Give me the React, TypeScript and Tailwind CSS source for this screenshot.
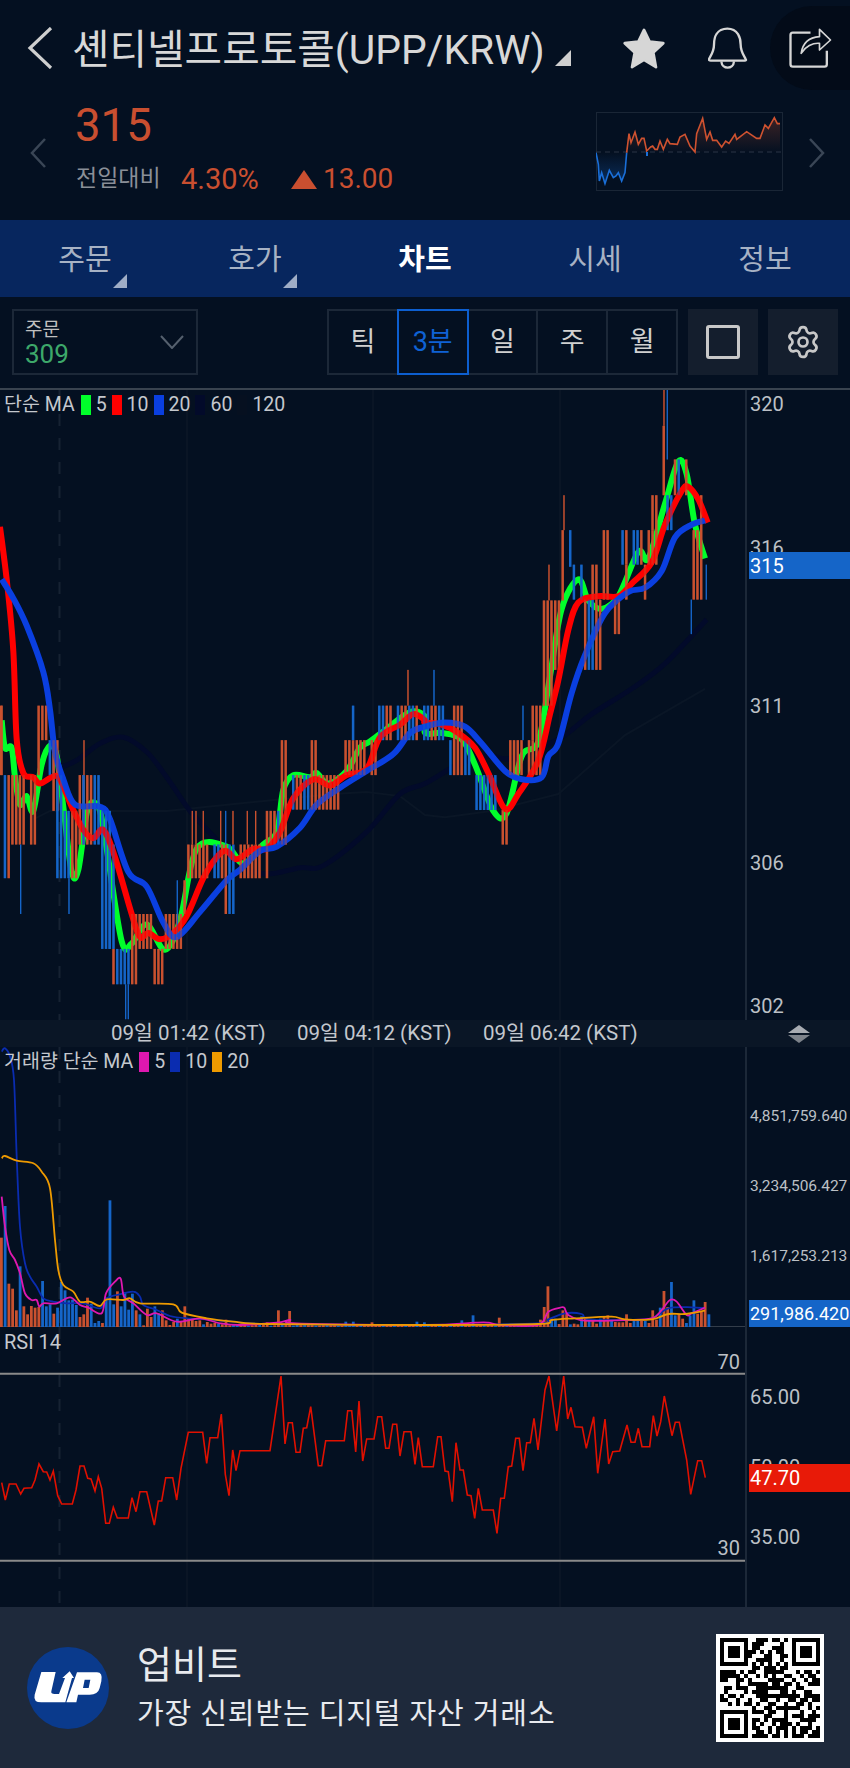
import React from 'react';
import { Settings } from 'lucide-react';

type Pt = number[];

const ORANGE = '#c9512f';
const BLUE = '#1565c8';
const FONT = "font-[Roboto,'Noto_Sans_CJK_KR',sans-serif]";

const shift = (pts: Pt[]) => pts.map(([x, y]) => [x + 1275, y]);
const line = (pts: Pt[], fy: (y: number) => number) =>
    pts.map(([x, y]) => `${(x / 3).toFixed(1)},${fy(y).toFixed(1)}`).join(' ');

// catmull-rom through the points, the moving averages are curves in the chart
function smooth(pts: Pt[], fy: (y: number) => number): string {
    const p = pts.map(([x, y]) => [x / 3, fy(y)]);
    let d = `M${p[0][0].toFixed(1)} ${p[0][1].toFixed(1)}`;
    for (let i = 0; i < p.length - 1; i++) {
        const a = p[Math.max(i - 1, 0)];
        const b = p[i];
        const c = p[i + 1];
        const e = p[Math.min(i + 2, p.length - 1)];
        const c1x = b[0] + (c[0] - a[0]) / 6;
        const c1y = b[1] + (c[1] - a[1]) / 6;
        const c2x = c[0] - (e[0] - b[0]) / 6;
        const c2y = c[1] - (e[1] - b[1]) / 6;
        d += ` C${c1x.toFixed(1)} ${c1y.toFixed(1)} ${c2x.toFixed(1)} ${c2y.toFixed(1)} ${c[0].toFixed(1)} ${c[1].toFixed(1)}`;
    }
    return d;
}

const mainY = (y: number) => y / 2.376;
const lowerY = (y: number) => y / 3 - 7;

// main chart moving averages, coordinates read off the zoomed crops
const ma5: Pt[] = [
    [5, 785], [15, 850], [35, 850], [45, 920], [60, 985], [80, 965], [100, 1000], [125, 890], [150, 845], [170, 870],
    [190, 990], [215, 1145], [235, 1140], [260, 1005], [280, 980], [300, 1000], [320, 1090], [365, 1310], [395, 1315],
    [440, 1270], [495, 1330], [540, 1260], [590, 1090], [680, 1085], [730, 1125], [790, 1080], [830, 1050], [850, 950],
    [880, 915], [930, 920], [950, 910], [985, 935], [1040, 905], [1080, 850], [1110, 835], [1160, 805], [1230, 765], [1275, 775],
    ...shift([
        [0, 815], [50, 815], [110, 830], [150, 890], [205, 1000], [245, 1005], [290, 870], [340, 835], [375, 680], [410, 520],
        [460, 450], [490, 500], [530, 520], [580, 490], [640, 385], [670, 400], [720, 270], [760, 170], [785, 200], [810, 320], [840, 400],
    ]),
];
const ma10: Pt[] = [
    [0, 325], [20, 450], [40, 620], [50, 830], [70, 910], [100, 920], [120, 935], [160, 918], [180, 925], [215, 990],
    [250, 1045], [280, 1065], [310, 1045], [345, 1110], [395, 1245], [420, 1300], [445, 1290], [480, 1305], [520, 1290],
    [560, 1250], [610, 1160], [650, 1110], [680, 1095], [710, 1115], [760, 1090], [800, 1090], [840, 1050], [880, 970],
    [940, 925], [990, 940], [1040, 915], [1100, 900], [1140, 825], [1200, 795], [1240, 770], [1275, 785],
    ...shift([
        [0, 790], [50, 795], [100, 815], [150, 850], [190, 910], [240, 995], [280, 960], [340, 880], [375, 770], [400, 690],
        [430, 570], [460, 505], [520, 490], [580, 490], [620, 460], [680, 410], [720, 320], [770, 240], [790, 230], [820, 260], [848, 315],
    ]),
];
const ma20: Pt[] = [
    [5, 450], [40, 495], [80, 560], [130, 670], [150, 760], [165, 860], [190, 925], [225, 985], [300, 990], [330, 1020],
    [385, 1145], [440, 1180], [490, 1265], [530, 1300], [600, 1240], [680, 1165], [720, 1140], [780, 1095], [830, 1085],
    [900, 1040], [950, 985], [1020, 945], [1100, 905], [1180, 865], [1230, 815], [1275, 800],
    ...shift([
        [60, 790], [120, 800], [170, 840], [240, 905], [290, 925], [350, 920], [370, 870], [400, 840], [440, 720], [480, 630],
        [540, 530], [610, 480], [660, 470], [710, 430], [750, 350], [800, 320], [840, 310],
    ]),
];
const ma60: Pt[] = [
    [170, 900], [230, 880], [300, 840], [370, 825], [440, 860], [500, 920], [570, 1000], [640, 1060], [720, 1130], [800, 1150],
    [900, 1135], [970, 1130], [1100, 1050], [1200, 960], [1275, 935],
    ...shift([[100, 890], [190, 870], [260, 875], [400, 830], [500, 770], [620, 710], [720, 650], [845, 545]]),
];
const ma120: Pt[] = [
    [100, 1020], [150, 1000], [500, 1000], [1000, 960], [1100, 955], [1200, 965], [1275, 1010],
    ...shift([[60, 1015], [200, 1000], [400, 960], [600, 820], [840, 710]]),
];

// x0, x1, top, bottom, colour (m = mixed)
const bands: [number, number, number, number, string][] = [
    [0, 10, 750, 915, 'o'], [10, 20, 915, 1160, 'b'], [20, 30, 915, 1160, 'o'], [30, 60, 915, 1080, 'o'], [65, 110, 915, 1080, 'o'],
    [110, 120, 750, 915, 'o'], [120, 145, 750, 832, 'm'], [145, 165, 832, 915, 'b'], [160, 175, 832, 1000, 'o'], [170, 190, 915, 1160, 'b'],
    [190, 235, 1000, 1160, 'm'], [235, 250, 915, 1080, 'o'], [250, 300, 915, 1080, 'm'], [300, 330, 1000, 1328, 'b'], [320, 340, 1080, 1328, 'b'],
    [340, 350, 1328, 1412, 'o'], [350, 385, 1328, 1412, 'b'], [390, 410, 1245, 1412, 'o'], [410, 460, 1245, 1328, 'o'], [460, 490, 1328, 1412, 'o'],
    [490, 545, 1245, 1328, 'o'], [550, 560, 1165, 1245, 'o'], [560, 610, 1080, 1160, 'o'], [610, 675, 1080, 1160, 'm'], [675, 700, 1080, 1245, 'm'],
    [700, 800, 1080, 1160, 'o'], [800, 830, 1000, 1080, 'o'], [830, 860, 1000, 1080, 'm'], [838, 860, 832, 1000, 'm'], [860, 925, 915, 997, 'm'],
    [925, 948, 832, 997, 'm'], [948, 1020, 915, 997, 'o'], [1020, 1130, 832, 915, 'o'], [1050, 1060, 750, 832, 'b'], [1130, 1275, 750, 832, 'm'],
];
const bandsRight: [number, number, number, number, string][] = [
    [0, 60, 750, 832, 'm'], [65, 85, 832, 915, 'b'], [85, 115, 750, 915, 'o'], [120, 140, 832, 915, 'b'], [145, 210, 915, 998, 'b'],
    [215, 250, 998, 1080, 'o'], [255, 300, 832, 915, 'o'], [305, 350, 832, 915, 'o'], [320, 350, 750, 832, 'o'], [355, 378, 500, 750, 'o'],
    [380, 410, 500, 665, 'o'], [403, 415, 333, 500, 'o'], [425, 445, 333, 420, 'b'], [440, 475, 415, 498, 'b'], [470, 530, 498, 665, 'm'],
    [500, 520, 415, 498, 'o'], [533, 555, 333, 498, 'o'], [560, 585, 498, 580, 'o'], [590, 650, 333, 415, 'm'], [600, 610, 415, 498, 'o'],
    [650, 665, 415, 498, 'o'], [670, 700, 333, 415, 'o'], [680, 700, 250, 333, 'o'], [705, 720, 85, 250, 'o'], [725, 745, 250, 333, 'b'],
    [745, 790, 165, 250, 'm'], [795, 803, 333, 498, 'b'], [805, 822, 333, 498, 'o'], [825, 836, 250, 498, 'o'], [840, 848, 333, 415, 'b'],
];
// x, top, bottom, colour
const wicks: [number, number, number, string][] = [
    [4, 750, 915, ORANGE], [60, 1080, 1245, BLUE], [250, 832, 915, ORANGE], [205, 1160, 1245, BLUE], [375, 1412, 1495, BLUE], [383, 1412, 1495, BLUE],
    [530, 1165, 1300, BLUE], [575, 1000, 1080, ORANGE], [586, 1000, 1080, ORANGE], [608, 1000, 1080, ORANGE], [660, 1000, 1080, ORANGE],
    [675, 1000, 1080, BLUE], [697, 1000, 1080, ORANGE], [740, 1000, 1080, ORANGE], [765, 1000, 1080, ORANGE], [1222, 665, 750, ORANGE],
    [1300, 665, 750, BLUE], [1567, 750, 832, BLUE], [1645, 415, 500, ORANGE], [1690, 250, 333, ORANGE], [1990, 0, 85, ORANGE], [2000, 0, 165, BLUE],
    [2072, 498, 580, BLUE], [2117, 415, 498, BLUE],
];

const COL = 11.23;
const Candles = ({ opacity = 1 }: { opacity?: number }) => {
    const all = [...bands, ...bandsRight.map(([a, b, t, u, c]) => [a + 1275, b + 1275, t, u, c] as [number, number, number, number, string])];
    const rects: React.ReactElement[] = [];
    all.forEach(([x0, x1, top, bottom, c], n) => {
        for (let i = Math.ceil(x0 / COL - 0.3); i * COL < x1 - 2; i++) {
            const blue = c === 'b' || (c === 'm' && (i * 13 + (i >> 2) * 5) % 3 !== 0);
            // some candles are only a dash, they leave a gap in the block
            if ((i * 17) % 7 === 0 && x1 - x0 > 30) continue;
            rects.push(
                <rect key={`${n}-${i}`} x={(i * COL) / 3} y={mainY(top)} width={2.4} height={mainY(bottom) - mainY(top)} fill={blue ? BLUE : ORANGE} />
            );
        }
    });
    return (
        <g opacity={opacity}>
            {rects}
            {wicks.map(([x, t, b, c], i) => (
                <rect key={i} x={x / 3} y={mainY(t)} width={1.3} height={mainY(b) - mainY(t)} fill={c} />
            ))}
        </g>
    );
};

const GridLines = ({ h }: { h: number }) => (
    <g>
        {[187, 373, 560].map(x => (
            <line key={x} x1={x} x2={x} y1={0} y2={h} stroke="#101b2b" strokeWidth={1} />
        ))}
        <line x1={59.5} x2={59.5} y1={0} y2={h} stroke="#162233" strokeWidth={2} strokeDasharray="12 12" />
    </g>
);

// volume bars, colour and height for the columns that stand out
const volBars: [string, number][] = [
    ['o', 268], ['b', 363], ['o', 130], ['o', 115], ['o', 50], ['b', 182], ['o', 62], ['o', 38], ['o', 63], ['o', 58], ['o', 60], ['b', 138],
    ['b', 62], ['b', 68], ['o', 40], ['b', 58], ['b', 135], ['b', 110], ['b', 80], ['b', 82], ['b', 66], ['o', 30], ['o', 38], ['o', 88], ['b', 70],
    ['b', 12], ['b', 18], ['o', 12], ['b', 88], ['b', 380], ['b', 68], ['o', 107], ['b', 62], ['b', 105], ['b', 52], ['b', 100], ['o', 50], ['b', 38],
    ['o', 5], ['o', 55], ['o', 30], ['b', 62], ['b', 40], ['o', 50], ['o', 20], ['o', 6], ['o', 15], ['b', 25], ['o', 15], ['o', 62], ['o', 25], ['o', 22],
    ['o', 18], ['o', 20], ['b', 8], ['o', 15], ['o', 10], ['o', 12], ['b', 10], ['o', 8], ['o', 22], ['o', 5], ['b', 6],
];
const volOverrides: Record<number, [string, number]> = {
    71: ['o', 14], 74: ['o', 50], 77: ['o', 48], 79: ['b', 10], 92: ['b', 16], 94: ['b', 16], 99: ['o', 14], 111: ['b', 16], 113: ['b', 14],
    123: ['b', 20], 126: ['b', 35], 133: ['o', 28], 144: ['o', 22], 145: ['o', 60], 146: ['o', 122], 147: ['b', 25], 148: ['b', 25], 150: ['o', 50],
    151: ['o', 40], 152: ['b', 8], 153: ['o', 10], 155: ['b', 32], 156: ['o', 25], 157: ['b', 18], 158: ['o', 18], 159: ['o', 10], 160: ['b', 25],
    161: ['o', 30], 162: ['o', 35], 163: ['b', 22], 164: ['o', 15], 165: ['o', 14], 166: ['o', 14], 167: ['o', 38], 168: ['o', 12], 169: ['b', 20],
    170: ['b', 18], 171: ['o', 18], 172: ['b', 18], 173: ['o', 12], 174: ['o', 50], 175: ['o', 22], 176: ['b', 58], 177: ['o', 108], 178: ['o', 60],
    179: ['b', 135], 180: ['b', 35], 181: ['o', 40], 182: ['o', 25], 183: ['b', 12], 184: ['b', 35], 185: ['b', 80], 186: ['o', 40], 187: ['o', 45],
    188: ['o', 75], 189: ['b', 38],
};

const volMa5: Pt[] = [
    [5, 470], [15, 560], [28, 630], [45, 660], [60, 700], [75, 760], [95, 780], [110, 780], [118, 800], [130, 790], [170, 790], [210, 772], [240, 795],
    [265, 803], [305, 820], [318, 760], [345, 725], [362, 716], [372, 770], [400, 790], [440, 825], [470, 820], [530, 845], [600, 835], [660, 850],
    [720, 855], [830, 848], [870, 840], [890, 850], [1275, 855],
    ...shift([[150, 848], [190, 848], [230, 855], [340, 855], [370, 815], [405, 803], [418, 803], [430, 825], [480, 842], [600, 840], [680, 835], [710, 810], [735, 780], [755, 785], [785, 825], [800, 820], [840, 803]]),
];
const volMa10: Pt[] = [
    [5, 35], [15, 25], [30, 50], [42, 120], [50, 350], [60, 560], [75, 670], [90, 710], [110, 740], [130, 775], [160, 785], [200, 790], [250, 790],
    [300, 805], [320, 775], [350, 765], [400, 755], [420, 770], [430, 795], [470, 810], [510, 828], [560, 835], [620, 838], [700, 845], [800, 852], [1275, 855],
    ...shift([[340, 850], [370, 838], [420, 820], [470, 822], [490, 838], [600, 840], [680, 835], [730, 805], [800, 802], [840, 805]]),
];
const volMa20: Pt[] = [
    [5, 355], [15, 348], [50, 362], [100, 370], [125, 395], [150, 445], [165, 600], [175, 690], [190, 735], [220, 755], [240, 785], [270, 785], [300, 798],
    [320, 778], [370, 780], [390, 775], [420, 790], [520, 793], [545, 818], [620, 835], [700, 845], [800, 852], [1275, 855],
    ...shift([[340, 852], [380, 840], [450, 835], [560, 830], [600, 838], [680, 838], [730, 822], [780, 822], [840, 812]]),
];

const rsi: Pt[] = [
    [5, 488], [16, 540], [28, 492], [48, 492], [62, 522], [72, 505], [95, 503], [105, 480], [117, 432], [130, 455], [140, 456], [150, 480], [160, 453],
    [173, 527], [185, 552], [217, 552], [228, 510], [240, 438], [252, 438], [263, 475], [273, 477], [285, 513], [295, 470], [305, 505], [317, 610], [328, 610],
    [340, 562], [352, 594], [385, 594], [396, 533], [408, 575], [420, 515], [440, 515], [463, 615], [475, 543], [485, 543], [497, 473], [518, 473], [530, 540],
    [543, 445], [565, 337], [608, 337], [620, 430], [630, 353], [653, 353], [664, 282], [676, 463], [687, 527], [698, 390], [708, 452], [720, 392], [810, 392],
    [843, 168], [855, 372], [865, 308], [877, 308], [888, 397], [900, 397], [910, 325], [920, 323], [932, 260], [955, 437], [965, 437], [977, 362], [1033, 362],
    [1043, 272], [1055, 272], [1067, 396], [1077, 243], [1088, 423], [1100, 357], [1122, 357], [1133, 290], [1145, 290], [1157, 385], [1167, 385], [1178, 313],
    [1190, 313], [1200, 408], [1212, 335], [1233, 335], [1245, 433], [1255, 353], [1267, 440], [1275, 440],
    ...shift([
        [25, 440], [38, 350], [48, 350], [60, 453], [70, 455], [82, 545], [93, 368], [105, 450], [115, 450], [127, 525], [138, 527], [149, 595], [160, 505],
        [172, 570], [205, 570], [216, 640], [227, 535], [238, 535], [250, 440], [260, 438], [272, 355], [283, 355], [294, 452], [305, 368], [316, 368], [327, 295],
        [339, 390], [360, 210], [372, 168], [395, 333], [416, 168], [428, 297], [438, 262], [450, 320], [472, 322], [484, 385], [506, 290], [518, 460], [540, 297],
        [551, 432], [563, 395], [584, 393], [606, 315], [618, 367], [630, 367], [640, 325], [651, 380], [674, 380], [685, 287], [696, 348], [707, 305], [718, 228],
        [741, 347], [751, 307], [763, 307], [785, 420], [797, 523], [818, 422], [830, 422], [841, 473],
    ]),
];

const miniUp = [
    [140, 165], [147, 108], [153, 135], [165, 103], [175, 140], [185, 122], [192, 122], [200, 160], [212, 148], [218, 145], [225, 155], [232, 155], [240, 130],
    [250, 155], [262, 125], [270, 138], [292, 140], [300, 118], [315, 110], [330, 145], [345, 163], [350, 108], [368, 62], [380, 125], [390, 103], [398, 128],
    [410, 128], [425, 148], [437, 130], [447, 137], [465, 110], [470, 125], [500, 102], [530, 122], [540, 122], [555, 82], [565, 92], [583, 60], [592, 78], [600, 78],
];
const miniDown = [
    [48, 165], [55, 200], [58, 250], [65, 225], [75, 258], [88, 218], [100, 240], [108, 235], [115, 225], [125, 250], [135, 225], [140, 165],
];

const qr = [
    '1111111001110110101111111', '1000001011100001001000001', '1011101011000111001011101', '1011101110101011001011101', '1011101100011001101011101',
    '1000001001111001001000001', '1111111010101010101111111', '0000000011011101100000000', '1111010110011111000101101', '1111101001010100110010110',
    '1100110100001111001001011', '0000100111110110110100111', '0110111001111111100110000', '0100001011110001101001100', '1011010001111111111101111',
    '1100100100110010011011011', '0010101101001100100110100', '0000000010011011111100101', '1111111011101100100010010', '1000001000011000101110111',
    '1011101011010111100011110', '1011101010100101110100100', '1011101011001011101011101', '1000001001101010101011011', '1111111011110110101110111',
];

const Corner = ({ className }: { className: string }) => (
    <svg width="16" height="16" viewBox="0 0 16 16" className={className}>
        <polygon points="16,0 16,16 0,16" fill="currentColor" />
    </svg>
);

const Chevron = ({ dir, className }: { dir: 'l' | 'r'; className: string }) => (
    <svg width="16" height="30" viewBox="0 0 16 30" fill="none" className={className}>
        <polyline points={dir === 'l' ? '15,1 2,15 15,29' : '1,1 14,15 1,29'} stroke="currentColor" strokeWidth="2.5" />
    </svg>
);

const MiniChart = () => (
    <svg width="187" height="79" viewBox="0 0 187 79" className="shrink-0">
        <defs>
            <linearGradient id="miniUp" x1="0" x2="0" y1="0" y2="1">
                <stop offset="0" stopColor="#c9512f" stopOpacity="0.28" />
                <stop offset="1" stopColor="#c9512f" stopOpacity="0" />
            </linearGradient>
            <linearGradient id="miniDown" x1="0" x2="0" y1="1" y2="0">
                <stop offset="0" stopColor="#1565c8" stopOpacity="0.35" />
                <stop offset="1" stopColor="#1565c8" stopOpacity="0" />
            </linearGradient>
        </defs>
        <rect x="0.5" y="0.5" width="186" height="78" fill="none" stroke="#1a2636" />
        <polygon
            points={`${miniUp.map(([x, y]) => `${(x - 48) / 3},${(y - 43) / 3}`).join(' ')} 184,40 31,40`}
            fill="url(#miniUp)"
        />
        <polygon points={miniDown.map(([x, y]) => `${(x - 48) / 3},${(y - 43) / 3}`).join(' ')} fill="url(#miniDown)" />
        <line x1="0" x2="186" y1="40" y2="40" stroke="#2a3546" strokeDasharray="5 4" />
        <polyline points={miniDown.map(([x, y]) => `${(x - 48) / 3},${(y - 43) / 3}`).join(' ')} fill="none" stroke="#1a6fd8" strokeWidth="1.6" />
        <polyline points={miniUp.map(([x, y]) => `${(x - 48) / 3},${(y - 43) / 3}`).join(' ')} fill="none" stroke="#cf5230" strokeWidth="1.6" />
        <rect x="50" y="40" width="2" height="4" fill="#1a6fd8" />
    </svg>
);

const Legend = ({ title, items }: { title: string; items: [string, string][] }) => (
    <div className="absolute left-[4px] top-[5px] flex items-center text-[19.5px] leading-[20px] text-[#c4c8ce]">
        <span className="mr-[6px]">{title}</span>
        {items.map(([color, label]) => (
            <React.Fragment key={label}>
                <span className="mr-[5px] h-[20px] w-[10px]" style={{ backgroundColor: color }} />
                <span className="mr-[5px]">{label}</span>
            </React.Fragment>
        ))}
    </div>
);

const AxisLabel = ({ top, text, size = 'text-[20px]' }: { top: number; text: string; size?: string }) => (
    <span className={`absolute left-[3px] -translate-y-1/2 leading-none text-[#bcc0c6] ${size}`} style={{ top }}>
        {text}
    </span>
);

const Tab = ({ label, active, corner }: { label: string; active?: boolean; corner?: boolean }) => (
    <div className={`relative flex flex-1 items-center justify-center pt-[4px] text-[29px] ${active ? 'font-bold text-white' : 'text-[#a7b2c4]'}`}>
        {label}
        {corner && <Corner className="absolute bottom-[9px] left-[113px] h-[14px] w-[14px] text-[#9fadc6]" />}
    </div>
);

const Periods = () => (
    <div className="flex h-[66px] w-[351px] border-2 border-[#1c2838]">
        {['틱', '3분', '일', '주', '월'].map(p =>
            p === '3분' ? (
                <div key={p} className="-my-[2px] -ml-[2px] flex h-[66px] flex-1 items-center justify-center border-2 border-[#0d5fd0] text-[27px] text-[#0f62d4]">
                    {p}
                </div>
            ) : (
                <div key={p} className="flex flex-1 items-center justify-center border-r-2 border-[#1c2838] text-[27px] text-[#d0d0d0] last:border-r-0">
                    {p}
                </div>
            )
        )}
    </div>
);

const MainPane = () => (
    <div className="flex h-[632px] border-t-2 border-[#39434f]">
        <div className="relative h-[630px] w-[745px]">
            <svg width="745" height="630" className="block">
                <GridLines h={630} />
                <polyline points={line(ma120, mainY)} fill="none" stroke="#0a1626" strokeWidth="2" />
                <path d={smooth(ma60, mainY)} fill="none" stroke="#020a2a" strokeWidth="5" />
                <path d={smooth(ma5, mainY)} fill="none" stroke="#00ff2a" strokeWidth="6" />
                <Candles />
                <path d={smooth(ma10, mainY)} fill="none" stroke="#ff0000" strokeWidth="6" />
                <path d={smooth(ma20, mainY)} fill="none" stroke="#0a3fe0" strokeWidth="6" />
                <Candles opacity={0.4} />
            </svg>
            <Legend
                title="단순 MA"
                items={[['#00ff2a', '5'], ['#ff0000', '10'], ['#0a3fe0', '20'], ['#020a2a', '60'], ['#061020', '120']]}
            />
        </div>
        <div className="relative w-[105px] border-l-2 border-[#1c2838]">
            <AxisLabel top={14} text="320" />
            <AxisLabel top={158} text="316" />
            <div className="absolute left-[2px] top-[162px] flex h-[27px] w-[103px] items-center bg-[#1565c8] pl-[1px] text-[20px] text-white">315</div>
            <AxisLabel top={316} text="311" />
            <AxisLabel top={473} text="306" />
            <AxisLabel top={616} text="302" />
        </div>
    </div>
);

const TimeAxis = () => (
    <div className="flex h-[27px] items-center bg-[#0a1626] pl-[111px] pr-[40px] text-[20.5px] text-[#c4c8ce]">
        <span className="w-[186px] whitespace-nowrap">09일 01:42 (KST)</span>
        <span className="w-[186px] whitespace-nowrap">09일 04:12 (KST)</span>
        <span className="whitespace-nowrap">09일 06:42 (KST)</span>
        <svg width="22" height="18" viewBox="0 0 22 18" className="ml-auto">
            <polygon points="11,0 22,8 0,8" fill="#a8acb2" />
            <polygon points="0,10 22,10 11,18" fill="#7d838b" />
        </svg>
    </div>
);

const VolumePane = () => {
    const bars = Array.from({ length: 190 }, (_, i): [string, number] => {
        if (volOverrides[i]) return volOverrides[i];
        if (volBars[i]) return volBars[i];
        return [i % 3 === 0 ? 'b' : 'o', 4 + ((i * 7) % 6)];
    });
    return (
        <div className="flex h-[280px]">
            <div className="relative h-[280px] w-[745px]">
                <svg width="745" height="280" className="block">
                    <GridLines h={280} />
                    <line x1="0" x2="745" y1="279.5" y2="279.5" stroke="#333d4a" />
                    {bars.map(([c, h], i) => (
                        <rect key={i} x={(i * COL) / 3} y={280 - h / 3} width={2.8} height={h / 3} fill={c === 'b' ? BLUE : ORANGE} />
                    ))}
                    <path d={smooth(volMa10, lowerY)} fill="none" stroke="#0a2cb0" strokeWidth="1.8" />
                    <path d={smooth(volMa5, lowerY)} fill="none" stroke="#df18b0" strokeWidth="1.8" />
                    <path d={smooth(volMa20, lowerY)} fill="none" stroke="#ee9a00" strokeWidth="1.8" />
                </svg>
                <Legend title="거래량 단순 MA" items={[['#df18b0', '5'], ['#0a2cb0', '10'], ['#ee9a00', '20']]} />
            </div>
            <div className="relative w-[105px] border-l-2 border-[#1c2838]">
                <AxisLabel top={70} text="4,851,759.640" size="text-[15.5px]" />
                <AxisLabel top={140} text="3,234,506.427" size="text-[15.5px]" />
                <AxisLabel top={210} text="1,617,253.213" size="text-[15.5px]" />
                <div className="absolute bottom-0 left-[2px] flex h-[27px] w-[103px] items-center overflow-hidden whitespace-nowrap bg-[#1565c8] pl-[1px] text-[18px] text-white">
                    291,986.420
                </div>
            </div>
        </div>
    );
};

const RsiPane = () => (
    <div className="flex h-[280px]">
        <div className="relative h-[280px] w-[745px]">
            <svg width="745" height="280" className="block">
                <GridLines h={280} />
                <line x1="0" x2="745" y1="46.7" y2="46.7" stroke="#8a8a8a" strokeWidth="2" />
                <line x1="0" x2="745" y1="233.7" y2="233.7" stroke="#8a8a8a" strokeWidth="2" />
                <polyline points={line(rsi, lowerY)} fill="none" stroke="#e01000" strokeWidth="1.6" />
            </svg>
            <span className="absolute left-[4px] top-[5px] text-[20px] leading-[20px] text-[#c4c8ce]">RSI 14</span>
            <span className="absolute right-[5px] top-[24px] text-[20px] leading-[22px] text-[#bcc0c6]">70</span>
            <span className="absolute right-[5px] top-[210px] text-[20px] leading-[22px] text-[#bcc0c6]">30</span>
        </div>
        <div className="relative w-[105px] border-l-2 border-[#1c2838]">
            <AxisLabel top={70} text="65.00" />
            <AxisLabel top={140} text="50.00" />
            <div className="absolute left-[2px] top-[137px] flex h-[28px] w-[103px] items-center bg-[#e81a08] pl-[1px] text-[20px] text-white">47.70</div>
            <AxisLabel top={210} text="35.00" />
        </div>
    </div>
);

const UpbitLogo = () => (
    <svg width="82" height="82" viewBox="22 22 246 246" className="shrink-0">
        <circle cx="145" cy="145" r="123" fill="#0a3a8c" />
        <path
            d="M65 97 L108 97 L95 155 Q93 163 105 163 L118 163 L136 115 L128 115 L150 95 L163 115 L157 115 L137 188 L65 188 Q40 188 45 165 Z"
            fill="#fff"
        />
        <path
            fillRule="evenodd"
            d="M172 98 L232 98 Q250 98 245 125 L240 145 Q235 165 210 165 L175 165 L170 188 L140 188 Z M195 120 L212 120 L207 145 L190 145 Z"
            fill="#fff"
        />
    </svg>
);

const Footer = () => (
    <div className="flex h-[161px] items-center bg-[#1e293b] pl-[27px] pr-[26px]">
        <UpbitLogo />
        <div className="ml-[28px] text-[#e8eaee]">
            <div className="text-[38px] leading-[48px]">업비트</div>
            <div className="mt-[5px] whitespace-nowrap text-[29px] leading-[40px] tracking-[0.9px]">가장 신뢰받는 디지털 자산 거래소</div>
        </div>
        <svg width="108" height="108" viewBox="-1 -1 27 27" className="ml-auto bg-white" shapeRendering="crispEdges">
            {qr.map((row, y) =>
                row.split('').map((c, x) => (c === '1' ? <rect key={`${x}-${y}`} x={x} y={y} width="1" height="1" fill="#000" /> : null))
            )}
        </svg>
    </div>
);

export default function App() {
    return (
        <div className={`h-[1768px] w-[850px] overflow-hidden bg-[#041021] ${FONT}`}>
            <div className="flex h-[96px] items-center pl-[27px]">
                <svg width="26" height="42" viewBox="0 0 26 42" fill="none" className="shrink-0 text-[#cfcfcf]">
                    <polyline points="24,1 3,21 24,41" stroke="currentColor" strokeWidth="3.2" />
                </svg>
                <span className="ml-[19px] mt-[4px] w-[474px] shrink-0 whitespace-nowrap text-[40.8px] leading-none text-[#d8d8d8]">셴티넬프로토콜(UPP/KRW)</span>
                <Corner className="ml-[9px] mt-[20px] shrink-0 text-[#cfcfcf]" />
                <svg width="44" height="43" viewBox="64 52 132 128" className="ml-[51px] shrink-0 text-[#d6d6d6]">
                    <path
                        d="M130 60 L147 95 L188 100 L158 128 L166 172 L130 150 L94 172 L102 128 L72 100 L113 95 Z"
                        fill="currentColor"
                        stroke="currentColor"
                        strokeWidth="8"
                        strokeLinejoin="round"
                    />
                </svg>
                <svg width="40" height="42" viewBox="320 52 120 126" fill="none" className="ml-[42px] shrink-0 text-[#d6d6d6]">
                    <path
                        d="M378 57 C345 57 338 85 338 105 C338 125 330 135 323 148 Q322 153 328 153 H430 Q436 153 433 148 C426 135 418 125 418 105 C418 85 410 57 378 57 Z"
                        stroke="currentColor"
                        strokeWidth="7"
                        strokeLinejoin="round"
                    />
                    <path d="M360 155 C362 180 396 180 398 155" stroke="currentColor" strokeWidth="7" />
                </svg>
                <div className="ml-[22px] flex h-[84px] w-[83px] shrink-0 items-center rounded-l-full bg-[#030b18] pl-[19px]">
                    <svg width="43" height="40" viewBox="564 54 128 120" fill="none" className="text-[#d6d6d6]">
                        <path d="M628 68 H575 Q568 68 568 75 V163 Q568 170 575 170 H670 Q677 170 677 163 V122" stroke="currentColor" strokeWidth="7" />
                        <path
                            d="M600 130 C605 95 630 82 655 80 L655 58 L688 90 L655 120 L655 100 C635 98 612 110 600 130 Z"
                            stroke="currentColor"
                            strokeWidth="5"
                            strokeLinejoin="round"
                        />
                    </svg>
                </div>
            </div>

            <div className="flex h-[124px] items-center pb-[14px] pl-[30px]">
                <Chevron dir="l" className="mt-[4px] shrink-0 text-[#3a4656]" />
                <div className="ml-[29px] w-[521px]">
                    <div className="-mt-[6px] text-[45.5px] leading-[52px] text-[#c94f30]">315</div>
                    <div className="mt-[10px] flex items-center leading-[34px]">
                        <span className="ml-[1px] w-[105px] text-[23px] text-[#8a8f98]">전일대비</span>
                        <span className="w-[110px] text-[29px] text-[#c94f30]">4.30%</span>
                        <svg width="26" height="19" viewBox="0 0 26 19">
                            <polygon points="13,0 26,19 0,19" fill="#c94f30" />
                        </svg>
                        <span className="ml-[6px] text-[28px] text-[#c94f30]">13.00</span>
                    </div>
                </div>
                <MiniChart />
                <Chevron dir="r" className="ml-[26px] mt-[4px] shrink-0 text-[#3a4656]" />
            </div>

            <div className="flex h-[77px] bg-[#07265e]">
                <Tab label="주문" corner />
                <Tab label="호가" corner />
                <Tab label="차트" active />
                <Tab label="시세" />
                <Tab label="정보" />
            </div>

            <div className="flex h-[91px] items-start pl-[12px] pt-[12px]">
                <div className="flex h-[66px] w-[186px] items-center border-2 border-[#1c2838] pl-[11px] pr-[12px]">
                    <div className="pt-[3px]">
                        <div className="text-[19px] leading-[22px] text-[#c0c0c0]">주문</div>
                        <div className="text-[26px] leading-[27px] text-[#3da86a]">309</div>
                    </div>
                    <svg width="24" height="14" viewBox="0 0 24 14" fill="none" className="ml-auto">
                        <polyline points="1,1 12,13 23,1" stroke="#55606e" strokeWidth="2" />
                    </svg>
                </div>
                <div className="ml-[129px]">
                    <Periods />
                </div>
                <div className="ml-[10px] flex h-[66px] w-[70px] items-center justify-center bg-[#141e2d]">
                    <div className="h-[34px] w-[34px] rounded-[3px] border-[3px] border-[#c8c8c8]" />
                </div>
                <div className="ml-[10px] flex h-[66px] w-[70px] items-center justify-center bg-[#141e2d]">
                    <Settings size={36} strokeWidth={1.8} className="text-[#c8c8c8]" />
                </div>
            </div>

            <MainPane />
            <TimeAxis />
            <VolumePane />
            <RsiPane />
            <Footer />
        </div>
    );
}
